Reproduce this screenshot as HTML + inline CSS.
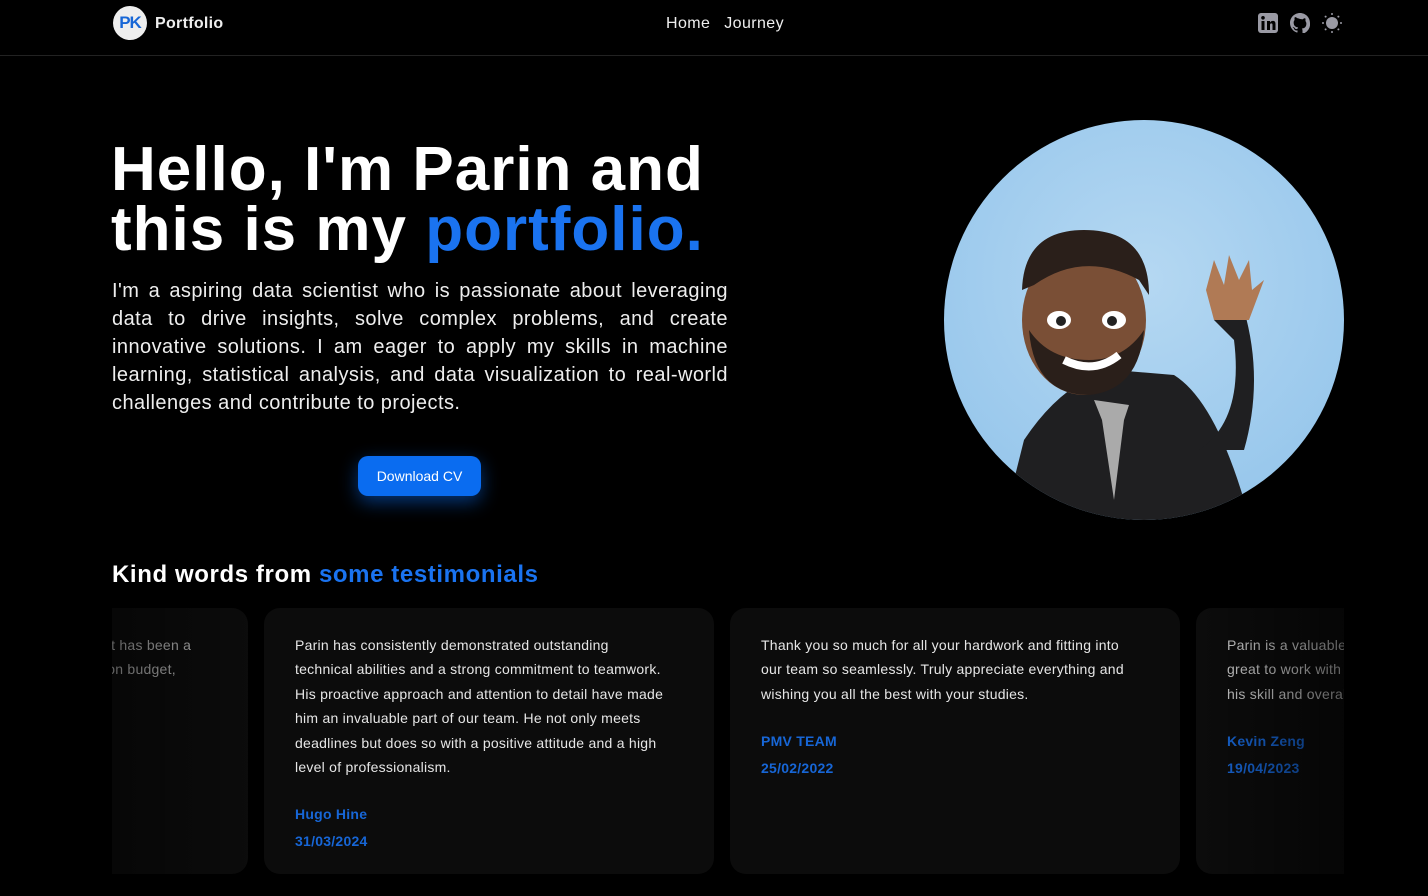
<!DOCTYPE html>
<html><head><meta charset="utf-8"><style>
*{margin:0;padding:0;box-sizing:border-box}
body{width:1428px;height:896px;background:#000;color:#fff;font-family:"Liberation Sans",sans-serif;overflow:hidden;position:relative}
.hdr{position:absolute;left:0;top:0;width:1428px;height:56px;border-bottom:1px solid #222}
.logo{position:absolute;left:113px;top:6px;width:34px;height:34px;border-radius:50%;background:#eee;color:#1766d6;font-weight:bold;font-size:17px;text-align:center;line-height:34px;letter-spacing:-1px}
.brand{position:absolute;left:155px;top:15px;font-weight:bold;font-size:16px;color:#eee;letter-spacing:.3px}
.nav{position:absolute;left:666px;top:15px;font-size:16px;color:#eee;letter-spacing:.4px;white-space:nowrap}
.nav span{margin-right:14px}
h1{position:absolute;left:111px;top:140px;font-size:62px;line-height:60px;font-weight:bold;letter-spacing:1px;white-space:nowrap}
.blue{color:#1a73f0}
.p{position:absolute;left:112px;top:277px;width:616px;font-size:20px;line-height:28px;text-align:justify;color:#eee;letter-spacing:.45px}
.btn{position:absolute;left:358px;top:456px;width:123px;height:40px;border-radius:10px;background:#0a6cf0;font-size:14px;text-align:center;line-height:40px;box-shadow:0 6px 18px rgba(10,108,240,.5)}
.av{position:absolute;left:944px;top:120px;width:400px;height:400px;border-radius:50%;background:radial-gradient(circle at 50% 40%,#b5d8f2,#8fc2ea);overflow:hidden}
h2{position:absolute;left:112px;top:561px;font-size:24px;font-weight:bold;letter-spacing:.6px;white-space:nowrap}
.wrap{position:absolute;left:112px;top:600px;width:1232px;height:290px;overflow:hidden}
.card{position:absolute;top:8px;height:266px;width:450px;background:#0c0c0c;border-radius:16px;padding:25px 44px 28px 31px;font-size:14px;line-height:24.4px;color:#e6e6e6;letter-spacing:.25px}
.card .n{color:#1766d6;font-weight:bold;margin-top:22px;line-height:27px}
.fade{position:absolute;top:0;height:290px;width:150px}
</style></head><body>
<div class="hdr">
<div class="logo">PK</div><div class="brand">Portfolio</div>
<div class="nav"><span>Home</span><span>Journey</span></div>
<svg style="position:absolute;left:1258px;top:13px" width="20" height="20" viewBox="0 0 20 20"><rect width="20" height="20" rx="3" fill="#9a9aa4"/><rect x="3.5" y="8" width="3" height="9" fill="#000"/><circle cx="5" cy="4.8" r="1.8" fill="#000"/><path d="M9 8h3v1.5c.7-1.2 2-1.8 3.3-1.6 1.8.2 2.2 1.6 2.2 3.2V17h-3v-5c0-1-.3-1.6-1.2-1.6S12 11 12 12v5H9z" fill="#000"/></svg>
<svg style="position:absolute;left:1290px;top:13px" width="20" height="20" viewBox="0 0 16 16"><path fill="#9a9aa4" d="M8 0C3.58 0 0 3.58 0 8c0 3.54 2.29 6.53 5.47 7.59.4.07.55-.17.55-.38v-1.33c-2.23.48-2.7-1.07-2.7-1.07-.36-.92-.89-1.17-.89-1.17-.73-.5.06-.49.06-.49.8.06 1.23.83 1.23.83.71 1.22 1.87.87 2.33.66.07-.52.28-.87.51-1.07-1.780-.2-3.64-.89-3.64-3.95 0-.87.31-1.59.82-2.15-.08-.2-.36-1.02.08-2.12 0 0 .67-.21 2.2.82A7.6 7.6 0 0 1 8 4.8c.68 0 1.36.09 2 .27 1.53-1.04 2.2-.82 2.2-.82.44 1.1.16 1.92.08 2.12.51.56.82 1.27.82 2.15 0 3.07-1.87 3.75-3.65 3.95.29.25.54.73.54 1.48v2.2c0 .21.15.46.55.38A8 8 0 0 0 16 8c0-4.42-3.58-8-8-8z"/></svg>
<svg style="position:absolute;left:1322px;top:13px" width="20" height="20" viewBox="0 0 20 20"><circle cx="10" cy="10" r="6" fill="#9a9aa4"/><g fill="#9a9aa4"><circle cx="10" cy="1" r="1"/><circle cx="10" cy="19" r="1"/><circle cx="1" cy="10" r="1"/><circle cx="19" cy="10" r="1"/><circle cx="3.6" cy="3.6" r="1"/><circle cx="16.4" cy="16.4" r="1"/><circle cx="3.6" cy="16.4" r="1"/><circle cx="16.4" cy="3.6" r="1"/></g></svg>
</div>
<h1>Hello, I'm Parin and<br>this is my <span class="blue">portfolio.</span></h1>
<div class="p">I'm a aspiring data scientist who is passionate about leveraging data to drive insights, solve complex problems, and create innovative solutions. I am eager to apply my skills in machine learning, statistical analysis, and data visualization to real-world challenges and contribute to projects.</div>
<div class="btn">Download CV</div>
<div class="av"><svg width="400" height="400" viewBox="0 0 400 400">
<path d="M60 400 L80 320 Q120 260 170 250 L230 255 Q270 280 300 380 L300 400Z" fill="#1f1f21"/>
<path d="M255 330 Q300 300 290 220 L270 200 L300 190 Q320 260 300 330Z" fill="#1f1f21"/>
<path d="M150 280 L185 285 L180 300 L170 380 L158 300Z" fill="#aaa"/>
<ellipse cx="140" cy="200" rx="62" ry="75" fill="#7a4f36"/>
<path d="M78 170 Q80 110 140 110 Q205 110 205 175 L195 160 Q140 130 90 165Z" fill="#2a1f1a"/>
<path d="M85 210 Q90 275 145 275 Q195 270 200 210 Q180 240 145 240 Q105 240 85 210Z" fill="#2a1f1a"/>
<ellipse cx="115" cy="200" rx="12" ry="9" fill="#fff"/><ellipse cx="170" cy="200" rx="12" ry="9" fill="#fff"/>
<circle cx="117" cy="201" r="5" fill="#222"/><circle cx="168" cy="201" r="5" fill="#222"/>
<path d="M120 240 Q150 255 175 235" stroke="#fff" stroke-width="8" fill="none"/>
<path d="M270 200 L262 170 L270 140 L280 165 L285 135 L295 160 L305 140 L308 170 L320 160 L305 200Z" fill="#b07a55"/>
</svg></div>
<h2>Kind words from <span class="blue">some testimonials</span></h2>
<div class="wrap">
<div class="card" style="left:-314px;color:#b0b0b0">Working with Parin has been excellent and it has been a pleasure. He always delivered on time and on budget, and stayed positive in every situation.</div>
<div class="card" style="left:152px">Parin has consistently demonstrated outstanding technical abilities and a strong commitment to teamwork. His proactive approach and attention to detail have made him an invaluable part of our team. He not only meets deadlines but does so with a positive attitude and a high level of professionalism.<div class="n">Hugo Hine<br>31/03/2024</div></div>
<div class="card" style="left:618px">Thank you so much for all your hardwork and fitting into our team so seamlessly. Truly appreciate everything and wishing you all the best with your studies.<div class="n">PMV TEAM<br>25/02/2022</div></div>
<div class="card" style="left:1084px;color:#ccc">Parin is a valuable team member, organisational and great to work with not only in every task but because of his skill and overall great attitude.<div class="n">Kevin Zeng<br>19/04/2023</div></div>
<div class="fade" style="left:0;background:linear-gradient(90deg,rgba(0,0,0,.45),rgba(0,0,0,0))"></div>
<div class="fade" style="right:0;background:linear-gradient(270deg,rgba(0,0,0,.55),rgba(0,0,0,0))"></div>
</div>
</body></html>
